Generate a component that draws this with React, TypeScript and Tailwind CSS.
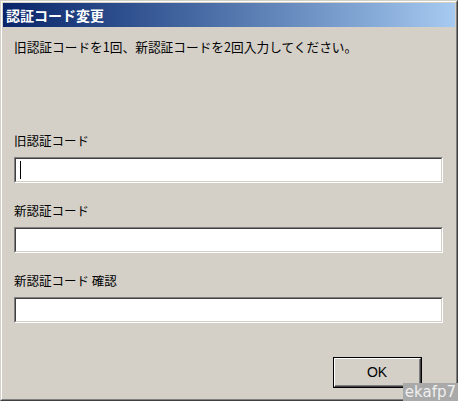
import React from "react";

const jp = { fontFamily: '"Noto Sans CJK JP", "Noto Sans", sans-serif' };

function Field({ label, caret }: { label: string; caret?: boolean }) {
  return (
    <div className="flex flex-col">
      <div className="h-[16px] leading-[16px] text-[12.5px] text-black">{label}</div>
      <div className="mt-[8px] w-[429px] h-[26px] border-t border-l border-t-[#808080] border-l-[#808080] border-b border-r border-b-white border-r-white">
        <div className="w-full h-full border-t border-l border-t-[#404040] border-l-[#404040] border-b border-r border-b-[#d4d0c8] border-r-[#d4d0c8] bg-white relative">
          {caret && <div className="absolute left-[4px] top-[2px] w-[1px] h-[18px] bg-black" />}
        </div>
      </div>
    </div>
  );
}

export default function App() {
  return (
    <div className="relative w-[458px] h-[401px] bg-[#d4d0c8]" style={jp}>
      <div className="w-full h-full border-t border-l border-t-[#d4d0c8] border-l-[#d4d0c8] border-b border-r border-b-[#404040] border-r-[#404040]">
        <div className="w-full h-full border-t border-l border-t-white border-l-white border-b border-r border-b-[#808080] border-r-[#808080] p-[1px] flex flex-col">
          <div className="h-[24px] flex items-center pl-[3px] bg-gradient-to-r from-[#0a246a] to-[#a6caf0]">
            <span className="text-white font-bold text-[14px] leading-[16px]">認証コード変更</span>
          </div>
          <div className="flex-1 flex flex-col pl-[11px] pt-[12px]">
            <div className="h-[16px] leading-[16px] text-[12.7px] text-black">
              旧認証コードを1回、新認証コードを2回入力してください。
            </div>
            <div className="mt-[78px] flex flex-col gap-[20px]">
              <Field label="旧認証コード" caret />
              <Field label="新認証コード" />
              <Field label="新認証コード 確認" />
            </div>
            <div className="mt-[34px] flex justify-end pr-[33px]">
              <div className="w-[89px] h-[31px] border border-black">
                <div className="w-full h-full border-t border-l border-t-white border-l-white border-b border-r border-b-[#404040] border-r-[#404040]">
                  <div className="w-full h-full border-b border-r border-b-[#808080] border-r-[#808080] flex items-center justify-center text-[14px] text-black" style={{ fontFamily: '"Liberation Sans", sans-serif' }}>
                    OK
                  </div>
                </div>
              </div>
            </div>
          </div>
        </div>
      </div>
      <div className="absolute right-0 bottom-0 h-[18px] px-[2px] bg-[#a9a9a9] text-[#f0f0f0] text-[15px] leading-[18px]" style={{ fontFamily: '"DejaVu Sans", sans-serif' }}>
        ekafp7
      </div>
    </div>
  );
}
